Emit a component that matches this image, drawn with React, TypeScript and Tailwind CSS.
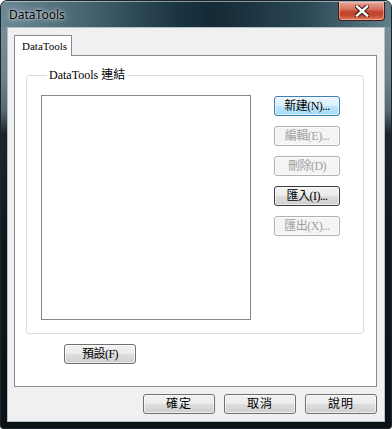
import React from "react";

const cjk = "font-['Liberation_Serif','Noto_Sans_CJK_TC',serif]";

type BtnKind = "normal" | "hover" | "disabled" | "focus";

function WinButton({
  label,
  kind = "normal",
  className = "",
}: {
  label: string;
  kind?: BtnKind;
  className?: string;
}) {
  const look =
    kind === "hover"
      ? "border-[#3c7fb1] bg-[linear-gradient(to_bottom,#eaf6fd_0%,#d9f0fc_50%,#bee6fd_51%,#a7d9f5_100%)] text-black"
      : kind === "disabled"
      ? "border-[#adb2b5] bg-[#f4f4f4] text-[#a0a0a0]"
      : kind === "focus"
      ? "border-[#3c3c3c] bg-[linear-gradient(to_bottom,#f2f2f2_0%,#ebebeb_50%,#dddddd_51%,#cfcfcf_100%)] text-black"
      : "border-[#707070] bg-[linear-gradient(to_bottom,#f2f2f2_0%,#ebebeb_50%,#dddddd_51%,#cfcfcf_100%)] text-black";
  return (
    <div
      className={`h-[20px] rounded-[3px] border flex items-center justify-center text-[12px] leading-none tracking-[-0.5px] shadow-[inset_0_0_0_1px_rgba(255,255,255,0.6)] ${cjk} ${look} ${className}`}
    >
      {label}
    </div>
  );
}

function CloseButton() {
  return (
    <div className="mt-[1px] mr-[6px] w-[47px] h-[19px] rounded-b-[4px] border border-[#4a1a12] border-t-0 bg-[linear-gradient(to_bottom,#e9a597_0%,#d7725e_40%,#c0432b_55%,#c64a30_75%,#dd7c5f_100%)] shadow-[inset_0_0_0_1px_rgba(255,210,200,0.5)] flex items-center justify-center">
      <svg width="14" height="12" viewBox="0 0 14 12">
        <path
          d="M2 1.5 L12 10.5 M12 1.5 L2 10.5"
          stroke="#3a1c16"
          strokeWidth="4.5"
          strokeLinecap="square"
        />
        <path
          d="M2 1.5 L12 10.5 M12 1.5 L2 10.5"
          stroke="#ffffff"
          strokeWidth="2.4"
          strokeLinecap="square"
        />
      </svg>
    </div>
  );
}

export default function App() {
  return (
    <div className="w-[392px] h-[429px] overflow-hidden rounded-t-[7px] rounded-b-[3px] border border-[#1b252b] bg-[linear-gradient(to_bottom,#7d939e_0%,#6b818c_18%,#55666f_26%,#1c262c_31%,#0f1519_60%,#0d1215_100%)] flex flex-col">
      {/* title bar */}
      <div className="h-[26px] shrink-0 flex items-start bg-[linear-gradient(to_right,#6b8896_0%,#46636f_22%,#1b3542_45%,#142a36_55%,#2b4754_78%,#607e8c_100%)] shadow-[inset_0_1px_0_rgba(220,235,240,0.55)]">
        <span className="ml-[8px] mt-[8px] text-[12px] leading-none text-black font-['Noto_Sans',sans-serif] [text-shadow:0_0_6px_rgba(255,255,255,0.9),0_0_2px_rgba(255,255,255,0.8)]">
          DataTools
        </span>
        <div className="ml-auto">
          <CloseButton />
        </div>
      </div>

      {/* client area */}
      <div className="ml-[6px] w-[378px] h-[395px] border border-[#b4c0c6] bg-[#f0f0f0] pl-[6px] pt-[7px] flex flex-col">
        <div className="relative z-10 -mb-px w-[58px] h-[21px] border border-b-0 border-[#898c95] bg-white flex items-center pl-[7px]">
          <span className={`text-[11px] leading-none ${cjk}`}>DataTools</span>
        </div>

        <div className="w-[363px] h-[332px] border border-[#898c95] bg-white pl-[11px] pt-[11px]">
          <fieldset className="w-[338px] h-[267px] rounded-[3px] border border-[#d5dfe5] pl-[14px] pt-[12px]">
            <legend className={`ml-[6px] px-[2px] text-[12px] leading-[16px] text-black ${cjk}`}>
              DataTools 連結
            </legend>
            <div className="flex">
              <div className="w-[210px] h-[225px] border border-[#828790] bg-white" />
              <div className="ml-[23px] mt-[1px] flex flex-col gap-[10px]">
                <WinButton label="新建(N)..." kind="hover" className="w-[66px]" />
                <WinButton label="編輯(E)..." kind="disabled" className="w-[66px]" />
                <WinButton label="刪除(D)" kind="disabled" className="w-[66px]" />
                <WinButton label="匯入(I)..." kind="focus" className="w-[66px]" />
                <WinButton label="匯出(X)..." kind="disabled" className="w-[66px]" />
              </div>
            </div>
          </fieldset>
          <div className="mt-[10px] ml-[38px]">
            <WinButton label="預設(F)" className="w-[72px]" />
          </div>
        </div>

        <div className="mt-[7px] mr-[7px] flex justify-end gap-[9px]">
          <WinButton label="確定" className="w-[72px] tracking-[1px]" />
          <WinButton label="取消" className="w-[72px] tracking-[1px]" />
          <WinButton label="說明" className="w-[72px] tracking-[1px]" />
        </div>
      </div>
    </div>
  );
}
